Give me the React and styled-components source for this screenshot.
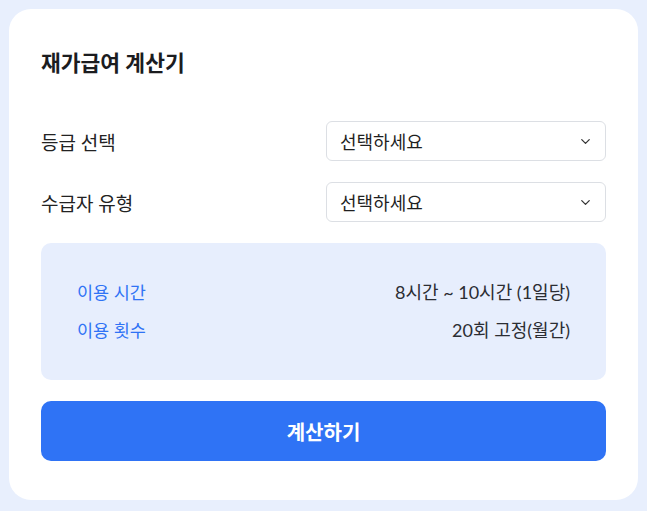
import React from "react";
import styled, { createGlobalStyle } from "styled-components";
import { ChevronDown } from "lucide-react";

const GlobalStyle = createGlobalStyle`
  * { box-sizing: border-box; }
  body {
    margin: 0;
    padding: 9px;
    background: #e8effd;
    font-family: "Lato", "Noto Sans CJK KR", sans-serif;
  }
`;

const Card = styled.div`
  background: #fff;
  border-radius: 22px;
  padding: 40px 32px 39px;
`;

const Title = styled.h2`
  margin: 0 0 43px;
  font-size: 21.5px;
  line-height: 29px;
  font-weight: 700;
  color: #1b1c1f;
`;

const FieldRow = styled.div`
  display: flex;
  align-items: center;
  justify-content: space-between;
  height: 40px;
  margin-bottom: 21px;
`;

const Label = styled.span`
  font-size: 19px;
  color: #222;
`;

const SelectBox = styled.div`
  width: 280px;
  height: 40px;
  border: 1px solid #dcdfe4;
  border-radius: 6px;
  display: flex;
  align-items: center;
  justify-content: space-between;
  padding: 0 12px 0 13px;
  font-size: 18px;
  color: #1f1f1f;
  svg { color: #333; }
`;

const InfoBox = styled.div`
  background: #e7eefd;
  border-radius: 10px;
  padding: 36px 36px;
  display: flex;
  flex-direction: column;
  gap: 11px;
  margin-bottom: 21px;
`;

const InfoRow = styled.div`
  display: flex;
  justify-content: space-between;
  font-size: 17.5px;
  line-height: 27px;
`;

const InfoKey = styled.span`
  color: #2f73f5;
`;

const InfoValue = styled.span`
  color: #2b2d33;
  font-size: 18px;
`;

const Button = styled.button`
  width: 100%;
  height: 60px;
  border: none;
  border-radius: 10px;
  background: #2f73f5;
  color: #fff;
  font-family: inherit;
  font-size: 20px;
  font-weight: 700;
  cursor: pointer;
`;

function Field({ label }) {
  return (
    <FieldRow>
      <Label>{label}</Label>
      <SelectBox>
        <span>선택하세요</span>
        <ChevronDown size={15} strokeWidth={2} />
      </SelectBox>
    </FieldRow>
  );
}

export default function App() {
  return (
    <>
      <GlobalStyle />
      <Card>
        <Title>재가급여 계산기</Title>
        <Field label="등급 선택" />
        <Field label="수급자 유형" />
        <InfoBox>
          <InfoRow>
            <InfoKey>이용 시간</InfoKey>
            <InfoValue>8시간 ~ 10시간 (1일당)</InfoValue>
          </InfoRow>
          <InfoRow>
            <InfoKey>이용 횟수</InfoKey>
            <InfoValue>20회 고정(월간)</InfoValue>
          </InfoRow>
        </InfoBox>
        <Button>계산하기</Button>
      </Card>
    </>
  );
}
